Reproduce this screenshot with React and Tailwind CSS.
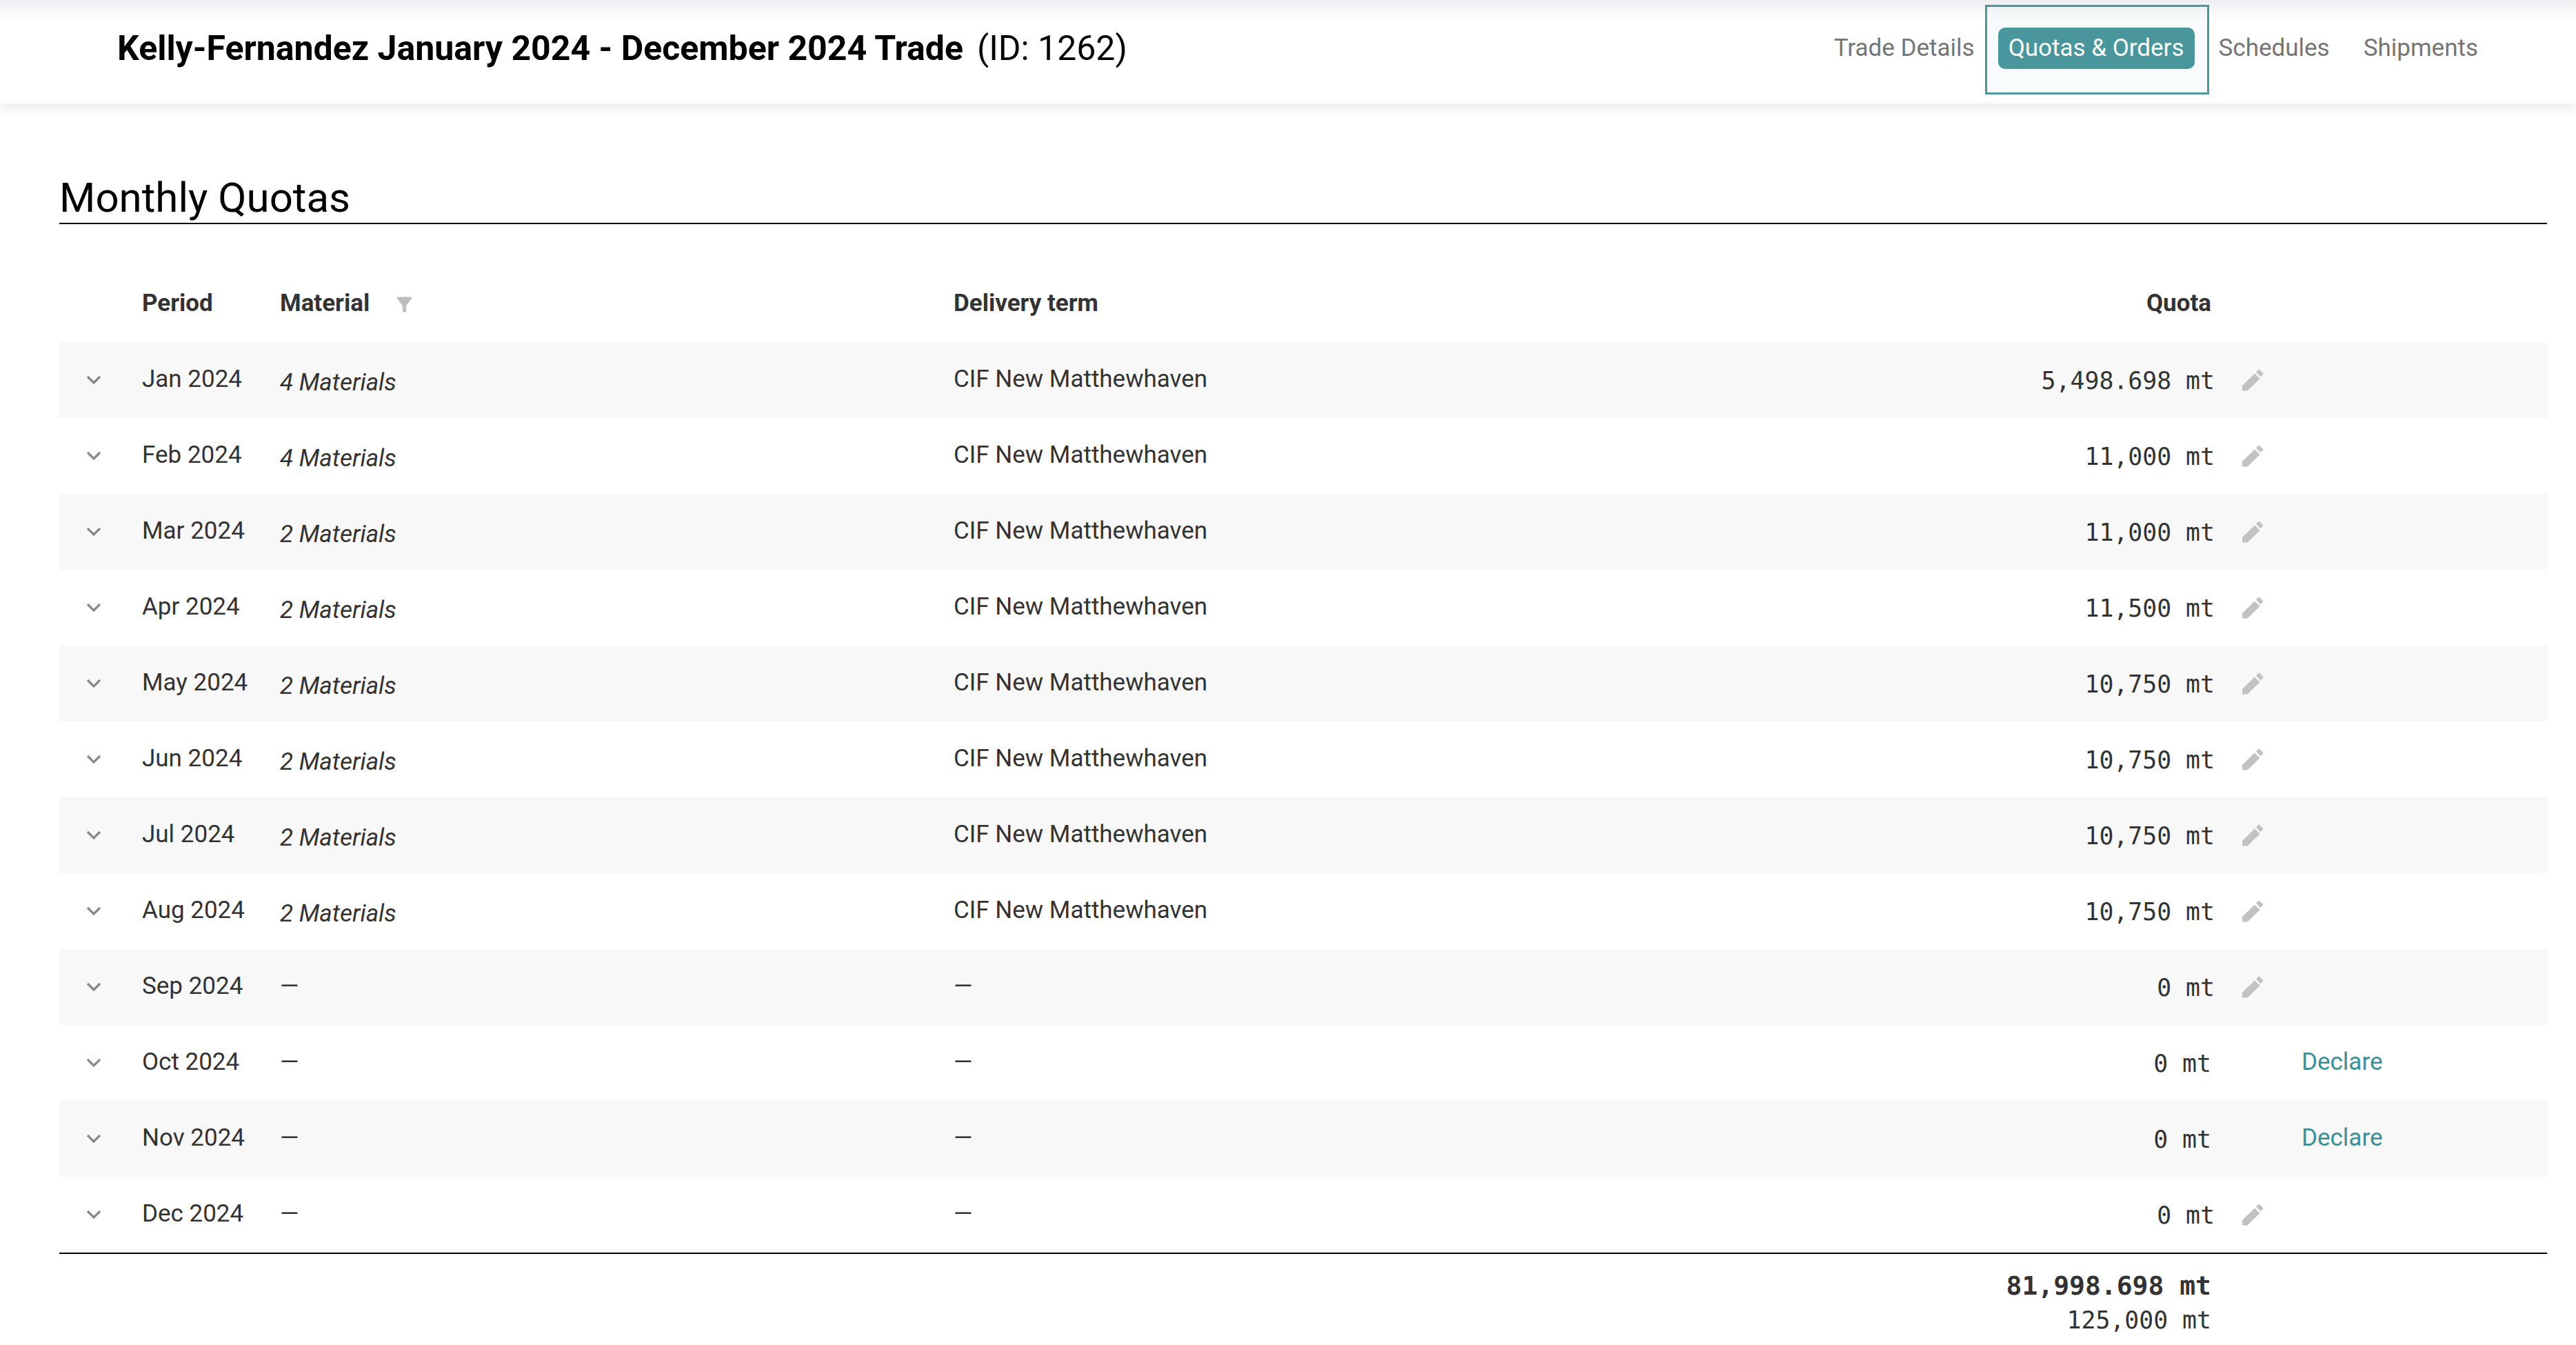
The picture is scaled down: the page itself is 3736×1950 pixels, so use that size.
import React from 'react';

const rows = [
  { period: 'Jan 2024', material: '4 Materials', term: 'CIF New Matthewhaven', quota: '5,498.698 mt' },
  { period: 'Feb 2024', material: '4 Materials', term: 'CIF New Matthewhaven', quota: '11,000 mt' },
  { period: 'Mar 2024', material: '2 Materials', term: 'CIF New Matthewhaven', quota: '11,000 mt' },
  { period: 'Apr 2024', material: '2 Materials', term: 'CIF New Matthewhaven', quota: '11,500 mt' },
  { period: 'May 2024', material: '2 Materials', term: 'CIF New Matthewhaven', quota: '10,750 mt' },
  { period: 'Jun 2024', material: '2 Materials', term: 'CIF New Matthewhaven', quota: '10,750 mt' },
  { period: 'Jul 2024', material: '2 Materials', term: 'CIF New Matthewhaven', quota: '10,750 mt' },
  { period: 'Aug 2024', material: '2 Materials', term: 'CIF New Matthewhaven', quota: '10,750 mt' },
  { period: 'Sep 2024', quota: '0 mt' },
  { period: 'Oct 2024', quota: '0 mt', declare: true },
  { period: 'Nov 2024', quota: '0 mt', declare: true },
  { period: 'Dec 2024', quota: '0 mt' },
];

function Chevron() {
  return (
    <svg width="24" height="14" viewBox="0 0 24 14" className="ml-[38px]" fill="none" stroke="#888888" strokeWidth="3.2">
      <path d="M3 2l9 9 9-9" />
    </svg>
  );
}

function Pencil() {
  return (
    <svg width="40" height="40" viewBox="0 0 40 40" fill="#c2c2c2">
      <path d="M5 35.5V28L23 10.5 30.5 18 12.5 35.5z" />
      <path d="M25 8.6l3.2-3.3c.6-.6 1.4-.6 2 0l4.6 4.5c.6.6.6 1.4 0 2l-3.2 3.4z" />
    </svg>
  );
}

function Funnel() {
  return (
    <svg width="33" height="33" viewBox="0 0 24 24" fill="#bdbdbd" className="ml-[34px] mt-[2px]">
      <path d="M4.25 5.61C6.27 8.2 10 13 10 13v6c0 .55.45 1 1 1h2c.55 0 1-.45 1-1v-6s3.72-4.8 5.74-7.39C20.25 4.95 19.78 4 18.95 4H5.04c-.83 0-1.3.95-.79 1.61z" />
    </svg>
  );
}

function App() {
  return (
    <div className="h-[1950px] overflow-hidden bg-white text-[35px] text-[#333333] font-['Roboto',sans-serif]">
      {/* Header */}
      <div className="h-[150px] flex items-start justify-between pl-[170px] pr-[142px] bg-gradient-to-b from-[#eeeef0] via-white via-[20%] to-white shadow-[0_6px_16px_rgba(0,0,0,0.09)]">
        <div className="h-[140px] flex items-center text-[50px] text-black">
          <span className="font-bold">Kelly-Fernandez January 2024 - December 2024 Trade</span>
          <span className="ml-[20px]">(ID: 1262)</span>
        </div>
        <div className="h-[140px] flex items-center text-[#757575]">
          <span>Trade Details</span>
          <div className="relative ml-[34px] mr-[35px] h-[60px] w-[285px] flex items-center justify-center rounded-[10px] bg-[#4a979d] text-white">
            Quotas &amp; Orders
            <div className="absolute top-[-33px] bottom-[-37px] left-[-19px] right-[-21px] border-[3px] border-[#4a979d] bg-[#4a979d]/[0.03]" />
          </div>
          <span>Schedules</span>
          <span className="ml-[49px]">Shipments</span>
        </div>
      </div>

      <div className="pl-[86px] pr-[42px]">
        {/* Section title */}
        <div className="mt-[102px] h-[73px] border-b-2 border-black text-[60px] leading-[70px] text-black">Monthly Quotas</div>

        {/* Column headers */}
        <div className="h-[171px] pt-[90px] grid grid-cols-[120px_200px_977px_1fr_487px] font-bold">
          <div />
          <div className="h-[50px] flex items-center">Period</div>
          <div className="h-[50px] flex items-center">Material<Funnel /></div>
          <div className="h-[50px] flex items-center justify-between">
            <span>Delivery term</span>
            <span>Quota</span>
          </div>
          <div />
        </div>

        {/* Rows */}
        {rows.map((row, i) => (
          <div key={row.period} className={`h-[110px] grid grid-cols-[120px_200px_977px_1fr_487px] items-center ${i % 2 === 0 ? 'bg-[#f8f8f8]' : 'bg-white'}`}>
            <Chevron />
            <div className="pb-[2px]">{row.period}</div>
            {row.material ? (
              <div className="pt-[8px] italic">{row.material}</div>
            ) : (
              <div className="pb-[2px]">—</div>
            )}
            <div className="flex items-center justify-between">
              <span className="pb-[2px]">{row.term || '—'}</span>
              <span className={`pt-[2px] font-['DejaVu_Sans_Mono',monospace] text-[34.8px] ${row.declare ? '' : 'mr-[-5px]'}`}>{row.quota}</span>
            </div>
            {row.declare ? (
              <div className="pl-[131px] pb-[2px] text-[#3b8f96]">Declare</div>
            ) : (
              <div className="pl-[40px] flex items-center"><Pencil /></div>
            )}
          </div>
        ))}

        {/* Totals */}
        <div className="border-t-2 border-black pt-[21px] grid grid-cols-[1fr_487px] font-['DejaVu_Sans_Mono',monospace] text-[34.8px]">
          <div className="text-right">
            <div className="font-bold text-[38px] leading-[50px]">81,998.698 mt</div>
            <div className="leading-[50px]">125,000 mt</div>
          </div>
          <div />
        </div>
      </div>
    </div>
  );
}

export default App;
